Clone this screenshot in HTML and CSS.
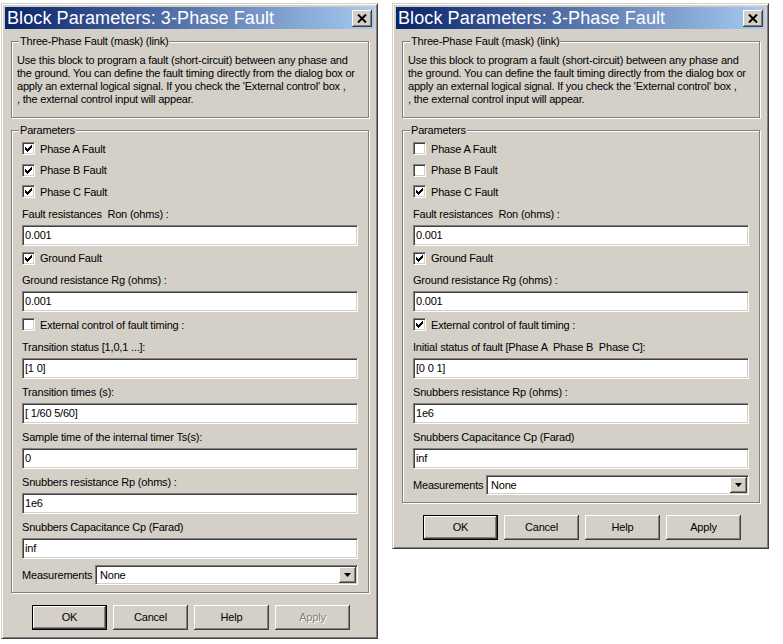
FILE: index.html
```html
<!DOCTYPE html>
<html lang="en">
<head>
    <meta charset="UTF-8">
    <title>Block Parameters: 3-Phase Fault</title>
    <link rel="stylesheet" href="styles.css">
</head>
<body>

<div class="desktop">

    <!-- dialog with internal fault timing -->
    <div class="window">
        <div class="titlebar">
            <span class="title">Block Parameters: 3-Phase Fault</span>
            <span class="close"><svg width="10" height="9" viewBox="0 0 10 9"><path d="M1 0.5 L9 8.5 M9 0.5 L1 8.5" stroke="#000" stroke-width="2"/></svg></span>
        </div>
        <div class="content">
            <div class="group mask">
                <div class="group-title">Three-Phase Fault (mask) (link)</div>
                <p class="desc">Use this block to program a fault (short-circuit) between any phase and<br>the ground. You can define the fault timing directly from the dialog box or<br>apply an external logical signal. If you check the 'External control' box ,<br>, the external control input will appear.</p>
            </div>

            <div class="group params">
                <div class="group-title">Parameters</div>
                <div class="check"><span class="box on"></span>Phase A Fault</div>
                <div class="check"><span class="box on"></span>Phase B Fault</div>
                <div class="check"><span class="box on"></span>Phase C Fault</div>
                <div class="field-label">Fault resistances  Ron (ohms) :</div>
                <div class="edit">0.001</div>
                <div class="check"><span class="box on"></span>Ground Fault</div>
                <div class="field-label">Ground resistance Rg (ohms) :</div>
                <div class="edit">0.001</div>
                <div class="check"><span class="box"></span>External control of fault timing :</div>
                <div class="field-label">Transition status [1,0,1 ...]:</div>
                <div class="edit">[1 0]</div>
                <div class="field-label">Transition times (s):</div>
                <div class="edit">[ 1/60 5/60]</div>
                <div class="field-label">Sample time of the internal timer Ts(s):</div>
                <div class="edit">0</div>
                <div class="field-label">Snubbers resistance Rp (ohms) :</div>
                <div class="edit">1e6</div>
                <div class="field-label">Snubbers Capacitance Cp (Farad)</div>
                <div class="edit">inf</div>
                <div class="combo-row">
                    <span class="combo-label">Measurements</span>
                    <div class="combo">
                        <span class="combo-value">None</span>
                        <span class="drop"><svg width="7" height="4" viewBox="0 0 7 4"><path d="M0 0h7L3.5 4z" fill="#000"/></svg></span>
                    </div>
                </div>
            </div>

            <div class="buttons">
                <div class="btn default">OK</div>
                <div class="btn">Cancel</div>
                <div class="btn">Help</div>
                <div class="btn disabled">Apply</div>
            </div>
        </div>
    </div>

    <!-- dialog with external control -->
    <div class="window">
        <div class="titlebar">
            <span class="title">Block Parameters: 3-Phase Fault</span>
            <span class="close"><svg width="10" height="9" viewBox="0 0 10 9"><path d="M1 0.5 L9 8.5 M9 0.5 L1 8.5" stroke="#000" stroke-width="2"/></svg></span>
        </div>
        <div class="content">
            <div class="group mask">
                <div class="group-title">Three-Phase Fault (mask) (link)</div>
                <p class="desc">Use this block to program a fault (short-circuit) between any phase and<br>the ground. You can define the fault timing directly from the dialog box or<br>apply an external logical signal. If you check the 'External control' box ,<br>, the external control input will appear.</p>
            </div>

            <div class="group params">
                <div class="group-title">Parameters</div>
                <div class="check"><span class="box"></span>Phase A Fault</div>
                <div class="check"><span class="box"></span>Phase B Fault</div>
                <div class="check"><span class="box on"></span>Phase C Fault</div>
                <div class="field-label">Fault resistances  Ron (ohms) :</div>
                <div class="edit">0.001</div>
                <div class="check"><span class="box on"></span>Ground Fault</div>
                <div class="field-label">Ground resistance Rg (ohms) :</div>
                <div class="edit">0.001</div>
                <div class="check"><span class="box on"></span>External control of fault timing :</div>
                <div class="field-label">Initial status of fault [Phase A  Phase B  Phase C]:</div>
                <div class="edit">[0 0 1]</div>
                <div class="field-label">Snubbers resistance Rp (ohms) :</div>
                <div class="edit">1e6</div>
                <div class="field-label">Snubbers Capacitance Cp (Farad)</div>
                <div class="edit">inf</div>
                <div class="combo-row">
                    <span class="combo-label">Measurements</span>
                    <div class="combo">
                        <span class="combo-value">None</span>
                        <span class="drop"><svg width="7" height="4" viewBox="0 0 7 4"><path d="M0 0h7L3.5 4z" fill="#000"/></svg></span>
                    </div>
                </div>
            </div>

            <div class="buttons">
                <div class="btn default">OK</div>
                <div class="btn">Cancel</div>
                <div class="btn">Help</div>
                <div class="btn">Apply</div>
            </div>
        </div>
    </div>

</div>

</body>
</html>
```

FILE: styles.css
```css
body {
    margin: 0;
    background: #fff;
    font-family: "Liberation Sans", Arial, sans-serif;
    font-size: 11px;
    letter-spacing: -0.2px;
    color: #000;
}
.desktop {
    display: flex;
    align-items: flex-start;
    gap: 14px;
    padding: 3px 0 0 1px;
}

/* window frame */
.window {
    width: 377px;
    box-sizing: border-box;
    background: #d4d0c8;
    border: 1px solid;
    border-color: #d4d0c8 #404040 #404040 #d4d0c8;
    box-shadow: inset 1px 1px #fff, inset -1px -1px #808080;
    padding: 3px;
}
.titlebar {
    height: 22px;
    display: flex;
    align-items: center;
    justify-content: space-between;
    padding: 0 2px;
    background: linear-gradient(to right, #0a246a, #a6caf0);
}
.title {
    color: #fff;
    font-size: 18px;
    letter-spacing: 0.1px;
    line-height: 22px;
}
.close {
    width: 20px;
    height: 17px;
    box-sizing: border-box;
    display: flex;
    align-items: center;
    justify-content: center;
    background: #d4d0c8;
    box-shadow: inset -1px -1px #404040, inset 1px 1px #fff, inset -2px -2px #808080;
}
.content { padding: 0 5px 0 6px; }

/* group boxes */
.group {
    border: 1px solid #808080;
    box-shadow: inset 1px 1px #fff, 1px 1px #fff;
}
.group-title {
    display: block;
    width: max-content;
    margin-top: -7px;
    padding: 0 1px;
    line-height: 13px;
    background: #d4d0c8;
}
.mask {
    margin-top: 12px;
    padding: 0 4px 11px 5px;
}
.mask .group-title { margin-left: 2px; }
.desc {
    margin: 6px 0 0;
    line-height: 13px;
}
.params {
    margin-top: 12px;
    padding: 0 10px 7px 10px;
}
.params .group-title { margin-left: -3px; margin-bottom: 1px; }

/* controls */
.check {
    height: 21.5px;
    display: flex;
    align-items: center;
}
.box {
    width: 13px;
    height: 13px;
    box-sizing: border-box;
    margin-right: 5px;
    background: #fff;
    border: 1px solid;
    border-color: #808080 #fff #fff #808080;
    box-shadow: inset 1px 1px #404040, inset -1px -1px #d4d0c8;
}
.box.on {
    background: #fff url("data:image/svg+xml,%3Csvg xmlns='http://www.w3.org/2000/svg' width='7' height='7' shape-rendering='crispEdges'%3E%3Cpath d='M0 2h1v3H0zM1 3h1v3H1zM2 4h1v3H2zM3 3h1v3H3zM4 2h1v3H4zM5 1h1v3H5zM6 0h1v3H6z'/%3E%3C/svg%3E") no-repeat 2px 2px;
}
.field-label {
    height: 22px;
    line-height: 22px;
    white-space: pre;
}
.edit {
    height: 21px;
    box-sizing: border-box;
    margin-bottom: 2px;
    padding: 0 2px;
    line-height: 19px;
    background: #fff;
    border: 1px solid;
    border-color: #808080 #fff #fff #808080;
    box-shadow: inset 1px 1px #404040, inset -1px -1px #d4d0c8;
}
.combo-row {
    display: flex;
    align-items: center;
    margin-top: 6px;
}
.combo-label { width: 73px; }
.combo {
    flex: 1;
    height: 20px;
    box-sizing: border-box;
    display: flex;
    align-items: center;
    justify-content: space-between;
    padding: 1px;
    background: #fff;
    border: 1px solid;
    border-color: #808080 #fff #fff #808080;
    box-shadow: inset 1px 1px #404040, inset -1px -1px #d4d0c8;
}
.combo-value { padding-left: 3px; }
.drop {
    width: 17px;
    height: 16px;
    box-sizing: border-box;
    display: flex;
    align-items: center;
    justify-content: center;
    background: #d4d0c8;
    box-shadow: inset -1px -1px #404040, inset 1px 1px #fff, inset -2px -2px #808080;
}

/* buttons */
.buttons {
    display: flex;
    gap: 6px;
    padding: 12px 0 5px 21px;
}
.btn {
    width: 75px;
    height: 25px;
    box-sizing: border-box;
    display: flex;
    align-items: center;
    justify-content: center;
    background: #d4d0c8;
    box-shadow: inset -1px -1px #404040, inset 1px 1px #fff, inset -2px -2px #808080;
}
.btn.default {
    border: 1px solid #000;
}
.btn.disabled {
    color: #808080;
    text-shadow: 1px 1px #fff;
}
```
